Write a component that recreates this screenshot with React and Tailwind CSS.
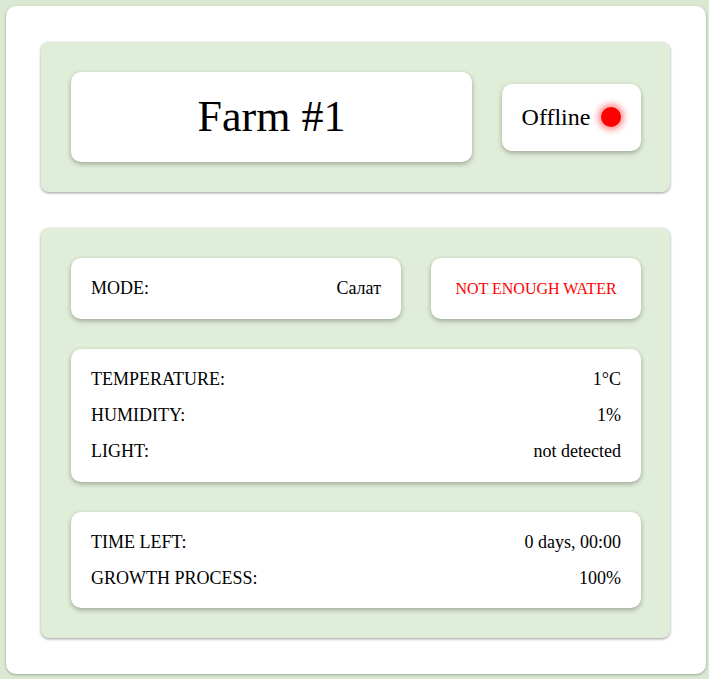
import React from 'react';

const Card = ({ className = '', children }) => (
  <div className={`bg-white rounded-[10px] shadow-[0_2px_5px_rgba(0,0,0,0.3)] ${className}`}>
    {children}
  </div>
);

const Row = ({ label, value }) => (
  <div className="flex h-9 items-center justify-between">
    <span>{label}</span>
    <span>{value}</span>
  </div>
);

export default function App() {
  return (
    <div className="min-h-[679px] bg-[#dbe9d3] pt-[6px] pb-[5px] pl-[6px] text-[18px] text-black font-['Liberation_Serif',serif]">
      <div className="w-[700px] bg-white rounded-[10px] shadow-[0_1px_3px_rgba(0,0,0,0.3)] pl-[35px] pr-[36px] py-[36px] flex flex-col gap-[36px]">
        <div className="bg-[#e0edd8] rounded-[8px] shadow-[0_1px_3px_rgba(0,0,0,0.4)] pl-[30px] pr-[29px] py-[30px] flex items-center gap-[30px]">
          <Card className="w-[401px] h-[90px] flex items-center justify-center">
            <span className="text-[44px]">Farm #1</span>
          </Card>
          <Card className="flex-1 h-[67px] flex items-center justify-center gap-[11px]">
            <span className="text-[24px]">Offline</span>
            <span className="w-5 h-5 rounded-full bg-[#ff0000] shadow-[0_0_6px_3px_rgba(255,0,0,0.45)]" />
          </Card>
        </div>

        <div className="bg-[#e0edd8] rounded-[8px] shadow-[0_1px_3px_rgba(0,0,0,0.4)] pl-[30px] pr-[29px] py-[30px] flex flex-col gap-[30px]">
          <div className="flex gap-[30px]">
            <Card className="w-[330px] h-[61px] px-5 flex items-center justify-between">
              <span>MODE:</span>
              <span>Салат</span>
            </Card>
            <Card className="flex-1 h-[61px] flex items-center justify-center">
              <span className="text-[16px] text-[#ff0000]">NOT ENOUGH WATER</span>
            </Card>
          </div>
          <Card className="h-[133px] px-5 flex flex-col justify-center">
            <Row label="TEMPERATURE:" value="1°C" />
            <Row label="HUMIDITY:" value="1%" />
            <Row label="LIGHT:" value="not detected" />
          </Card>
          <Card className="h-[96px] px-5 flex flex-col justify-center">
            <Row label="TIME LEFT:" value="0 days, 00:00" />
            <Row label="GROWTH PROCESS:" value="100%" />
          </Card>
        </div>
      </div>
    </div>
  );
}
